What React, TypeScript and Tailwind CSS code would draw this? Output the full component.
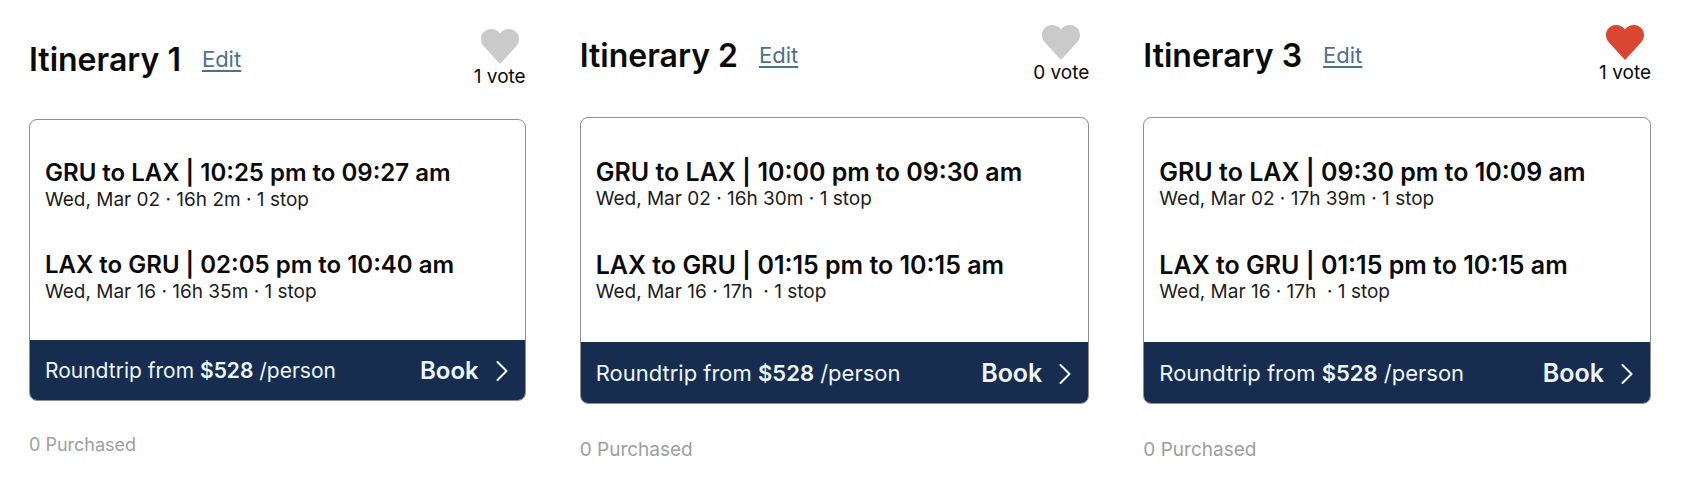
import { useState } from 'react'
import clsx from 'clsx'

interface Flight {
  route: string
  detail: string
}

interface Itinerary {
  id: number
  votes: number
  voted: boolean
  flights: Flight[]
  price: string
  purchased: number
}

const ITINERARIES: Itinerary[] = [
  {
    id: 1,
    votes: 1,
    voted: false,
    flights: [
      { route: 'GRU to LAX | 10:25 pm to 09:27 am', detail: 'Wed, Mar 02 · 16h 2m · 1 stop' },
      { route: 'LAX to GRU | 02:05 pm to 10:40 am', detail: 'Wed, Mar 16 · 16h 35m · 1 stop' },
    ],
    price: '$528',
    purchased: 0,
  },
  {
    id: 2,
    votes: 0,
    voted: false,
    flights: [
      { route: 'GRU to LAX | 10:00 pm to 09:30 am', detail: 'Wed, Mar 02 · 16h 30m · 1 stop' },
      { route: 'LAX to GRU | 01:15 pm to 10:15 am', detail: 'Wed, Mar 16 · 17h  · 1 stop' },
    ],
    price: '$528',
    purchased: 0,
  },
  {
    id: 3,
    votes: 1,
    voted: true,
    flights: [
      { route: 'GRU to LAX | 09:30 pm to 10:09 am', detail: 'Wed, Mar 02 · 17h 39m · 1 stop' },
      { route: 'LAX to GRU | 01:15 pm to 10:15 am', detail: 'Wed, Mar 16 · 17h  · 1 stop' },
    ],
    price: '$528',
    purchased: 0,
  },
]

function HeartIcon() {
  return (
    <svg viewBox="0 0 38 35" className="h-[35px] w-[38px]" fill="currentColor" aria-hidden="true">
      <path d="M19 35 L3.2 17.8 C1.1 15.5 0 13 0 10 C0 4.4 4.4 0 10 0 C13.8 0 17 1.6 19 4.4 C21 1.6 24.2 0 28 0 C33.6 0 38 4.4 38 10 C38 13 36.9 15.5 34.8 17.8 Z" />
    </svg>
  )
}

function ChevronIcon() {
  return (
    <svg viewBox="0 0 12 20" className="h-5 w-3" fill="none" stroke="currentColor" strokeWidth="2" aria-hidden="true">
      <path d="M1.5 1 L10.5 10 L1.5 19" strokeLinecap="round" strokeLinejoin="round" />
    </svg>
  )
}

function ItineraryCard({ itinerary, compact }: { itinerary: Itinerary; compact?: boolean }) {
  const [voted, setVoted] = useState(itinerary.voted)
  const votes = itinerary.votes + Number(voted) - Number(itinerary.voted)

  return (
    <section className={clsx('min-w-0', compact ? 'pt-[29px]' : 'pt-[25px]')}>
      <header className="flex items-center justify-between">
        <div className="flex items-center gap-[21px]">
          <h2 className="text-[32px] font-semibold leading-10">Itinerary {itinerary.id}</h2>
          <a href="#edit" className="pb-0.5 text-[22px] leading-8 text-[#4d718c] underline decoration-2 underline-offset-3">Edit</a>
        </div>
        <button
          type="button"
          aria-pressed={voted}
          onClick={() => setVoted(!voted)}
          className="flex flex-col items-center"
        >
          <span className={voted ? 'text-[#d94632]' : 'text-[#cacaca]'}>
            <HeartIcon />
          </span>
          <span className="text-[19px] leading-[26px]">{votes} vote</span>
        </button>
      </header>

      <article className={clsx('overflow-hidden rounded-lg border border-[#8f8f8f]', compact ? 'mt-[29px]' : 'mt-[31px]')}>
        <div className={clsx('flex flex-col px-[15px]', compact ? 'gap-[38px] pb-9 pt-[38px]' : 'gap-[39px] pb-[38px] pt-[39px]')}>
          {itinerary.flights.map((flight) => (
            <div key={flight.route}>
              <h3 className={clsx('font-semibold leading-[30px]', compact ? 'text-[24px]' : 'text-[25px]')}>{flight.route}</h3>
              <p className="whitespace-pre text-[19px] leading-6 text-[#1c1c1c]">{flight.detail}</p>
            </div>
          ))}
        </div>
        <footer
          className={clsx(
            'flex items-center justify-between bg-[#172d50] pl-[15px] pr-[17px] pt-0.5 text-[#edf5ff]',
            compact ? 'h-[60px]' : 'h-[61px]',
          )}
        >
          <p className={compact ? 'text-[21px]' : 'text-[22px]'}>
            Roundtrip from <strong className="font-semibold">{itinerary.price}</strong> /person
          </p>
          <button
            type="button"
            className={clsx('flex items-center gap-[17px] font-semibold', compact ? 'text-[24px]' : 'text-[25px]')}
          >
            Book
            <ChevronIcon />
          </button>
        </footer>
      </article>

      <p className={clsx('leading-7 text-[#9e9e9e]', compact ? 'mt-[30px] text-[18px]' : 'mt-8 text-[19px]')}>
        {itinerary.purchased} Purchased
      </p>
    </section>
  )
}

export default function App() {
  return (
    <main className="grid grid-cols-[497fr_510fr_508fr] gap-[54px] bg-white pl-[29px] pr-[33px] font-['Inter','Liberation_Sans',sans-serif] text-[#0a0a0a]">
      {ITINERARIES.map((itinerary, i) => (
        <ItineraryCard key={itinerary.id} itinerary={itinerary} compact={i === 0} />
      ))}
    </main>
  )
}
